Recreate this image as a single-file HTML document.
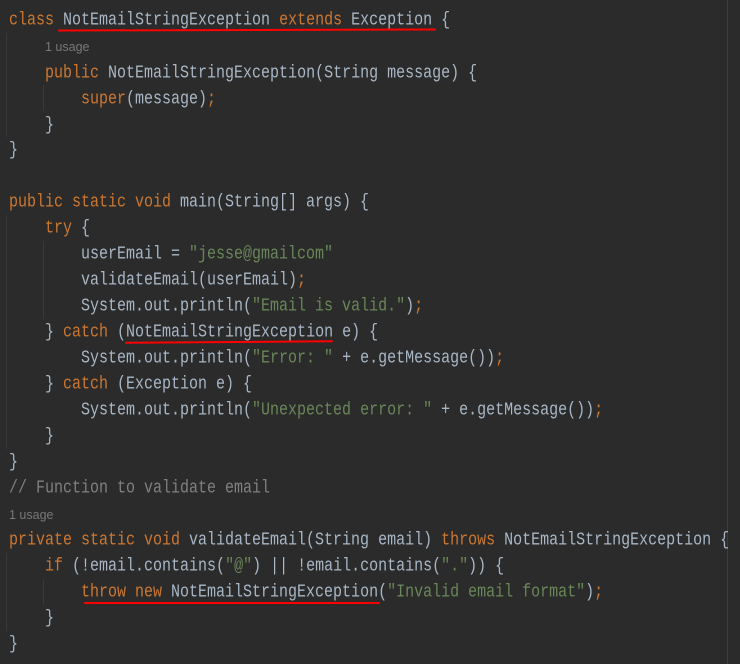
<!DOCTYPE html>
<html><head><meta charset="utf-8"><style>
body{margin:0;width:740px;height:664px;background:#2b2b2b;overflow:hidden;position:relative;font-family:"Liberation Mono",monospace;font-size:15px;color:#a9b7c6}
.l{position:absolute;left:9px;white-space:pre;height:26px;line-height:26px;transform:scaleY(1.2);transform-origin:left center;margin-top:1px}
.k{color:#cc7832}.s{color:#6a8759}.c{color:#808080}
.u{position:absolute;font-family:"Liberation Sans",sans-serif;font-size:12.5px;color:#787878;line-height:26px;height:26px}
.r{position:absolute;height:2px;background:#f00;border-radius:1px}
.g{position:absolute;width:1px;background:#393939}
</style></head><body>
<div style="position:absolute;left:727px;top:0;width:1px;height:664px;background:#3c3c3c"></div>
<div class="g" style="left:6px;top:33px;height:104px"></div>
<div class="g" style="left:43px;top:85px;height:26px"></div>
<div class="g" style="left:6px;top:215px;height:234px"></div>
<div class="g" style="left:43px;top:241px;height:78px"></div>
<div class="g" style="left:6px;top:553px;height:78px"></div>
<div class="g" style="left:43px;top:579px;height:26px"></div>
<div class="l" style="top:7px"><span class="k">class</span> NotEmailStringException <span class="k">extends</span> Exception {</div>
<div class="u" style="left:45px;top:34px">1 usage</div>
<div class="l" style="top:60px">    <span class="k">public</span> NotEmailStringException(String message) {</div>
<div class="l" style="top:86px">        <span class="k">super</span>(message)<span class="k">;</span></div>
<div class="l" style="top:112px">    }</div>
<div class="l" style="top:137px">}</div>
<div class="l" style="top:189px"><span class="k">public static void</span> main(String[] args) {</div>
<div class="l" style="top:215px">    <span class="k">try</span> {</div>
<div class="l" style="top:241px">        userEmail = <span class="s">"jesse@gmailcom"</span></div>
<div class="l" style="top:267px">        validateEmail(userEmail)<span class="k">;</span></div>
<div class="l" style="top:293px">        System.out.println(<span class="s">"Email is valid."</span>)<span class="k">;</span></div>
<div class="l" style="top:319px">    } <span class="k">catch</span> (NotEmailStringException e) {</div>
<div class="l" style="top:345px">        System.out.println(<span class="s">"Error: "</span> + e.getMessage())<span class="k">;</span></div>
<div class="l" style="top:371px">    } <span class="k">catch</span> (Exception e) {</div>
<div class="l" style="top:397px">        System.out.println(<span class="s">"Unexpected error: "</span> + e.getMessage())<span class="k">;</span></div>
<div class="l" style="top:423px">    }</div>
<div class="l" style="top:449px">}</div>
<div class="l" style="top:475px"><span class="c">// Function to validate email</span></div>
<div class="u" style="left:9px;top:502px">1 usage</div>
<div class="l" style="top:527px"><span class="k">private static void</span> validateEmail(String email) <span class="k">throws</span> NotEmailStringException {</div>
<div class="l" style="top:553px">    <span class="k">if</span> (!email.contains(<span class="s">"@"</span>) || !email.contains(<span class="s">"."</span>)) {</div>
<div class="l" style="top:579px">        <span class="k">throw new</span> NotEmailStringException(<span class="s">"Invalid email format"</span>)<span class="k">;</span></div>
<div class="l" style="top:605px">    }</div>
<div class="l" style="top:631px">}</div>
<div class="r" style="left:58px;top:29px;width:378px;transform:rotate(-0.15deg)"></div>
<div class="r" style="left:125px;top:341px;width:208px;transform:rotate(-0.4deg)"></div>
<div class="r" style="left:84px;top:602px;width:296px"></div>
</body></html>
